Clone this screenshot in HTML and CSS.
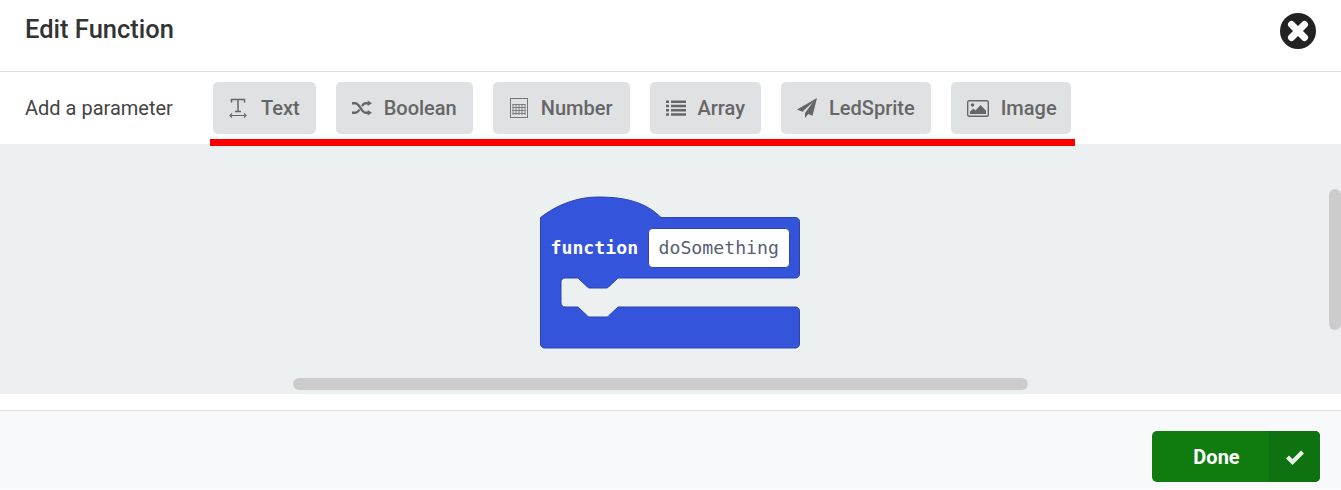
FILE: index.html
```html
<!DOCTYPE html>
<html lang="en">
<head>
    <meta charset="UTF-8">
    <title>Edit Function</title>
    <link rel="stylesheet" href="styles.css">
</head>
<body>
    <!-- Header -->
    <header class="header">
        <h1 class="title">Edit Function</h1>
        <svg class="close" width="36" height="36" viewBox="0 0 36 36">
            <circle cx="18" cy="18" r="18" fill="#222"/>
            <path d="M11.500 11.500L24.500 24.500M24.500 11.500L11.500 24.500" stroke="#fff" stroke-width="7" stroke-linecap="round"/>
        </svg>
    </header>

    <!-- Parameter buttons -->
    <section class="params">
        <span class="params-label">Add a parameter</span>
        <div class="param-list">
            <button class="param-btn">
                <svg class="icon" width="20" height="20" viewBox="0 0 20 20">
                    <path d="M2.500 4.500V1.500H15.500V4.500M9 1.500V13.500M6 13.500H12" fill="none" stroke="#666" stroke-width="1.500"/>
                    <path d="M1 17.500H17M3 15.500L1 17.500L3 19.500M15 15.500L17 17.500L15 19.500" fill="none" stroke="#666" stroke-width="1.100"/>
                </svg>
                Text
            </button>
            <button class="param-btn">
                <svg class="icon" width="20" height="16" viewBox="0 0 21 16">
                    <path d="M0 3H3.500C8 3 10 13 14 13H17M0 13H3.500C5.500 13 6.800 11.500 8 9.800M10.500 6C11.500 4.300 12.500 3 14 3H17" fill="none" stroke="#666" stroke-width="2.400"/>
                    <path d="M16.500 0L21 3L16.500 6ZM16.500 10L21 13L16.500 16Z" fill="#666"/>
                </svg>
                Boolean
            </button>
            <button class="param-btn param-btn-wide">
                <svg class="icon" width="20" height="20" viewBox="-1 0 20 20">
                    <rect x="0.500" y="0.500" width="17" height="19" fill="none" stroke="#777"/>
                    <path d="M2.500 6.500H15.500M2.500 9.500H15.500M2.500 12.500H15.500M2.500 15.500H15.500M3 6V17M6 6V17M9 6V17M12 6V17M15 6V17" fill="none" stroke="#777" stroke-width="0.900"/>
                </svg>
                Number
            </button>
            <button class="param-btn">
                <svg class="icon" width="20" height="16" viewBox="0 0 20 16">
                    <path d="M0 0.500H3V3H0ZM5 0.500H20V3H5ZM0 4.800H3V7.300H0ZM5 4.800H20V7.300H5ZM0 9H3V11.500H0ZM5 9H20V11.500H5ZM0 13.200H3V15.700H0ZM5 13.200H20V15.700H5Z" fill="#666"/>
                </svg>
                Array
            </button>
            <button class="param-btn">
                <svg class="icon" width="20" height="20" viewBox="0 0 20 20">
                    <path d="M20 0L0 11.500L5.500 13.800L16 4L8 15V20L11.300 16L15.500 17.800Z" fill="#666"/>
                </svg>
                LedSprite
            </button>
            <button class="param-btn param-btn-tight">
                <svg class="icon" width="22" height="17" viewBox="0 0 22 17">
                    <rect x="0.700" y="0.700" width="20.600" height="15.600" rx="1.500" fill="none" stroke="#666" stroke-width="1.400"/>
                    <circle cx="5.500" cy="5" r="1.800" fill="#666"/>
                    <path d="M3 14V11.500L6.500 8.500L8.500 10.500L13.500 5L19 10.500V14Z" fill="#666"/>
                </svg>
                Image
            </button>
        </div>
        <div class="red-line"></div>
    </section>

    <!-- Blocks workspace -->
    <section class="workspace">
        <svg class="block" width="264" height="156" viewBox="0 0 264 156">
            <path class="block-shape" d="M2.500 23.500C20 10 40 3 60 3C88 3 108 8.500 123 23.500H257.500C259.700 23.500 261.500 25.300 261.500 27.500V80C261.500 82.200 259.700 84 257.500 84H80L71 92.500C70.300 93.500 69 94 68 94H52C51 94 49.700 93.500 49 92.500L40 84H27C24.800 84 23 85.800 23 88V109C23 111.200 24.800 113 27 113H40L49 121.500C49.700 122.500 51 123 52 123H68C69 123 70.300 122.500 71 121.500L80 113H257.500C259.700 113 261.500 114.800 261.500 117V150C261.500 152.200 259.700 154 257.500 154H6.500C4.300 154 2.500 152.200 2.500 150Z"/>
            <text class="block-kw" x="12.500" y="60">function</text>
            <rect class="block-field" x="110.500" y="34.500" width="141" height="39" rx="4"/>
            <text class="block-name" x="120.500" y="60">doSomething</text>
        </svg>
        <div class="scroll-v"></div>
        <div class="scroll-h"></div>
    </section>

    <!-- Footer -->
    <footer class="footer">
        <button class="done-btn">
            <span class="done-text">Done</span>
            <span class="done-icon">
                <svg width="20" height="16" viewBox="0 0 20 16">
                    <path d="M2.500 8L7.500 13L17.500 3" fill="none" stroke="#e8f2e8" stroke-width="4.200"/>
                </svg>
            </span>
        </button>
    </footer>
</body>
</html>
```

FILE: styles.css
```css
/* General Styles */
body {
    font-family: Roboto, Arial, sans-serif;
    background-color: #fff;
    margin: 0;
    padding: 0;
    color: #333;
    height: 490px;
    overflow: hidden;
}

/* Header */
.header {
    display: flex;
    justify-content: space-between;
    align-items: center;
    height: 71px;
    padding: 0 25px;
    border-bottom: 1px solid #dedede;
}
.title {
    margin: 0 0 14px;
    font-size: 25.5px;
    font-weight: 500;
    color: #333;
}
.close {
    margin: 0 0 9px;
}

/* Parameter row */
.params {
    position: relative;
    display: flex;
    align-items: center;
    height: 72px;
    padding-left: 25px;
    box-sizing: border-box;
}
.params-label {
    width: 188px;
    font-size: 20px;
    color: #444;
    flex-shrink: 0;
}
.param-list {
    display: flex;
    gap: 20px;
}
.param-btn {
    display: flex;
    align-items: center;
    gap: 12px;
    height: 52px;
    padding: 0 16px;
    border: none;
    border-radius: 5px;
    background-color: #e0e1e3;
    color: #666;
    font-family: Roboto, Arial, sans-serif;
    font-size: 20px;
    font-weight: 500;
}
.param-btn-tight {
    padding-right: 14px;
}
.param-btn-wide {
    padding-right: 17px;
}
.icon {
    flex-shrink: 0;
}
.red-line {
    position: absolute;
    z-index: 1;
    left: 210px;
    top: 67px;
    width: 865px;
    height: 7px;
    background-color: #f00;
}

/* Workspace */
.workspace {
    position: relative;
    height: 250px;
    background-color: #ecf0f1;
}
.block {
    position: absolute;
    left: 538px;
    top: 50px;
}
.block-shape {
    fill: #3455db;
    stroke: #2a44af;
    stroke-width: 1;
}
.block-field {
    fill: #fff;
    stroke: #2a44af;
    stroke-width: 1;
}
.block-kw, .block-name {
    font-family: "DejaVu Sans Mono", monospace;
    font-size: 18.200px;
}
.block-kw {
    fill: #fff;
    font-weight: bold;
}
.block-name {
    fill: #575e75;
}
.scroll-v {
    position: absolute;
    right: 0;
    top: 45px;
    width: 12px;
    height: 141px;
    border-radius: 6px;
    background-color: #ccc;
}
.scroll-h {
    position: absolute;
    left: 293px;
    top: 234px;
    width: 735px;
    height: 12px;
    border-radius: 6px;
    background-color: #ccc;
}

/* Footer */
.footer {
    display: flex;
    justify-content: flex-end;
    margin-top: 16px;
    height: 79px;
    padding: 20px 21px 0 0;
    box-sizing: border-box;
    border-top: 1px solid #dedede;
    background-color: #f8f9fb;
}
.done-btn {
    display: flex;
    width: 168px;
    height: 51px;
    padding: 0;
    border: none;
    border-radius: 5px;
    overflow: hidden;
    background-color: #107c10;
    color: #fff;
    font-family: Roboto, Arial, sans-serif;
    font-size: 20px;
    font-weight: 700;
}
.done-text {
    flex: 1;
    padding-left: 12px;
    line-height: 53px;
    text-align: center;
}
.done-icon {
    display: flex;
    align-items: center;
    justify-content: center;
    width: 51px;
    background-color: #0f7210;
}
```
